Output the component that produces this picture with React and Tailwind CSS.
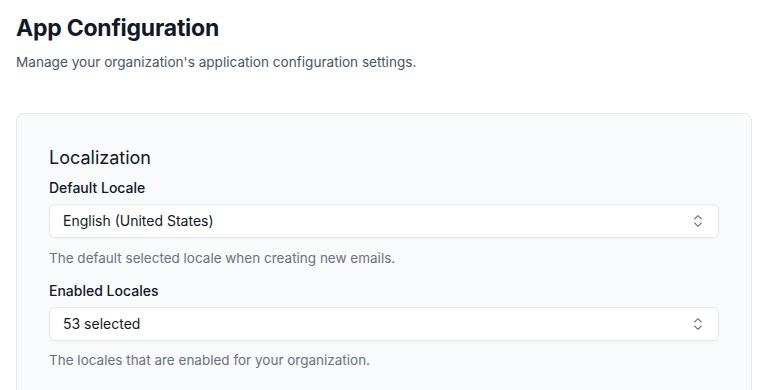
import { ChevronsUpDown } from 'lucide-react'

function SelectBox({ value }) {
  return (
    <button
      type="button"
      className="flex h-[34px] w-full items-center justify-between rounded-md border border-[#e5e7eb] bg-white pl-[13px] pr-[12px] text-left text-sm text-[#111827] shadow-[0_1px_2px_rgba(0,0,0,0.04)]"
    >
      <span>{value}</span>
      <ChevronsUpDown size={16} strokeWidth={1.6} className="text-[#6b7280]" />
    </button>
  )
}

export default function App() {
  return (
    <div className="min-h-screen bg-white font-['Inter',sans-serif] text-[#111827]">
      <div className="pl-4 pt-3">
        <h1 className="text-[23px] font-bold leading-8 tracking-[-0.01em]">App Configuration</h1>
        <p className="mt-2 text-[13.6px] leading-5 text-[#4b5563]">
          Manage your organization's application configuration settings.
        </p>

        <div className="mt-[41px] w-[736px] rounded-lg border border-[#e5e7eb] bg-[#f9fafb] px-8 pb-8 pt-8">
          <h2 className="text-lg leading-6">Localization</h2>

          <div className="mt-2 text-sm font-medium leading-5">Default Locale</div>
          <div className="mt-[6px]">
            <SelectBox value="English (United States)" />
          </div>
          <p className="mt-[10px] text-[13.5px] leading-5 text-[#6b7280]">
            The default selected locale when creating new emails.
          </p>

          <div className="mt-[13px] text-sm font-medium leading-5">Enabled Locales</div>
          <div className="mt-[6px]">
            <SelectBox value="53 selected" />
          </div>
          <p className="mt-[9px] text-[13.5px] leading-5 text-[#6b7280]">
            The locales that are enabled for your organization.
          </p>
        </div>
      </div>
    </div>
  )
}
